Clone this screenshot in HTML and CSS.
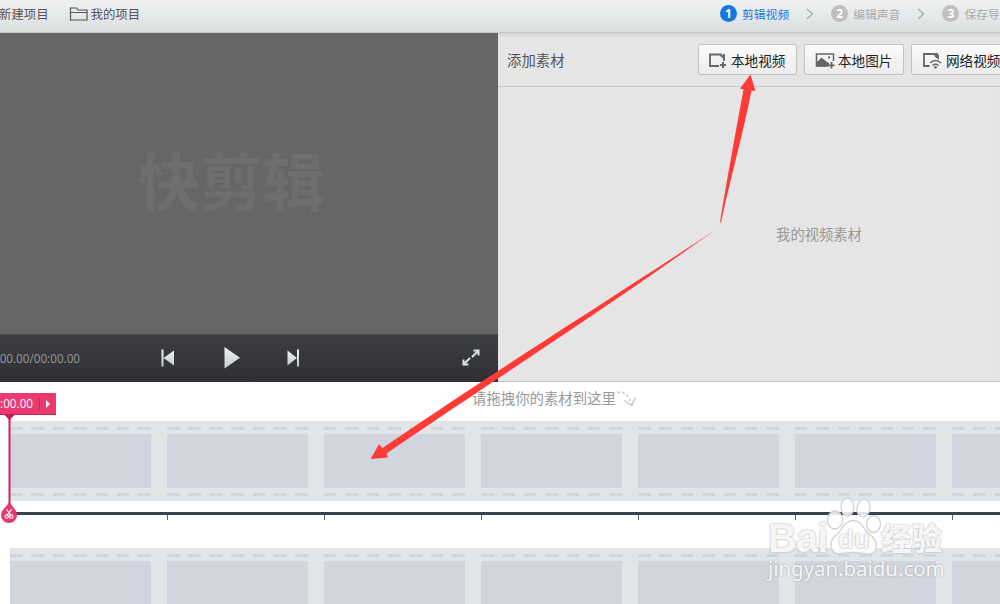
FILE: index.html
```html
<!DOCTYPE html>
<html lang="zh-CN">
<head>
<meta charset="utf-8">
<title>快剪辑</title>
<link rel="stylesheet" href="styles.css">
</head>
<body>
<div class="app">
  <header class="topbar">
    <nav class="menu">
      <span class="new-project">新建项目</span>
      <svg class="folder" width="20" height="16" viewBox="0 0 20 16"><path d="M1.500 14v-12h6l1.500 2h9v10zM1.500 6.500h16.500" fill="none" stroke="#555" stroke-width="1.200"/></svg>
      <span>我的项目</span>
    </nav>
    <ol class="steps">
      <li class="step active"><b class="num">1</b><span>剪辑视频</span></li>
      <li class="sep"><svg width="8" height="12" viewBox="0 0 8 12"><path d="M1 1l5.500 5L1 11" fill="none" stroke="#aaa" stroke-width="1.300"/></svg></li>
      <li class="step"><b class="num">2</b><span>编辑声音</span></li>
      <li class="sep"><svg width="8" height="12" viewBox="0 0 8 12"><path d="M1 1l5.500 5L1 11" fill="none" stroke="#aaa" stroke-width="1.300"/></svg></li>
      <li class="step"><b class="num">3</b><span>保存导</span></li>
    </ol>
  </header>
  <main class="workspace">
    <section class="player">
      <div class="screen"><span class="brand">快剪辑</span></div>
      <div class="controls">
        <span class="time">00.00/00:00.00</span>
        <svg class="icons" width="498" height="47" viewBox="0 0 498 47">
          <defs><linearGradient id="metal" x1="0" y1="0" x2="0" y2="1"><stop offset="0" stop-color="#f2f3f4"/><stop offset="1" stop-color="#c3c8cc"/></linearGradient></defs>
          <g fill="url(#metal)">
            <path d="M161.500 14.500h2v17h-2zM174 15.500v15l-10.500-7.500z"/>
            <path d="M224.500 12v21.500L240 22.700z"/>
            <path d="M287.500 15.500v15L297 23zM297 14.500h2v17h-2z"/>
          </g>
          <g fill="none" stroke="#dde0e2" stroke-width="2"><path d="M473.500 15.500h5v5M478 16l-6 6M463.500 24.500v5h5M464 29l6-6"/></g>
        </svg>
      </div>
    </section>
    <section class="library">
      <div class="library-head">
        <span class="library-title">添加素材</span>
        <div class="buttons">
          <div class="btn btn-video">
            <svg width="20" height="18" viewBox="0 0 20 18"><path d="M11 15H2V3.500h12" fill="none" stroke="#666" stroke-width="1.800"/><path d="M16 3v7" stroke="#666" stroke-width="1.800"/><path d="M11.500 4.500L17 9V3.500z" fill="#666"/><path d="M15 11v6M12 14h6" stroke="#666" stroke-width="2"/></svg>
            <span>本地视频</span>
          </div>
          <div class="btn btn-image">
            <svg width="20" height="18" viewBox="0 0 20 18"><path d="M11.500 15H1.500V3h17v7" fill="none" stroke="#666" stroke-width="1.500"/><path d="M2 15.500V11l4.500-4.500L12 11l2 1v3.500zM13 5.500h2v2h-2z" fill="#666"/><path d="M16.500 11v6.500M13.500 14.300h6" stroke="#666" stroke-width="1.800"/></svg>
            <span>本地图片</span>
          </div>
          <div class="btn btn-web">
            <svg width="20" height="18" viewBox="0 0 20 18"><path d="M7.500 15H2V3h13v4" fill="none" stroke="#666" stroke-width="1.800"/><path d="M11.500 4.500L17 9V3.500z" fill="#666"/><path d="M8 12q5.500-5 11 0M10.500 14.500q3-2.500 6 0" fill="none" stroke="#666" stroke-width="1.500"/><circle cx="13.500" cy="16.400" r="1.300" fill="#666"/></svg>
            <span>网络视频</span>
          </div>
        </div>
      </div>
      <div class="library-body"><span>我的视频素材</span></div>
    </section>
  </main>
  <section class="timeline">
    <div class="hint">
      <span>请拖拽你的素材到这里</span>
      <svg width="22" height="16" viewBox="0 0 22 16"><path d="M1 1.500q11-2 14.500 12" fill="none" stroke="#c0c9d3" stroke-width="1.300" stroke-dasharray="3 2"/><path d="M8 9.500l7.700 5L19.500 6.500" fill="none" stroke="#c0c9d3" stroke-width="1.400"/></svg>
    </div>
    <div class="track">
      <div class="cell"><i class="perf"></i><i class="frame"></i><i class="perf"></i></div><div class="cell"><i class="perf"></i><i class="frame"></i><i class="perf"></i></div><div class="cell"><i class="perf"></i><i class="frame"></i><i class="perf"></i></div><div class="cell"><i class="perf"></i><i class="frame"></i><i class="perf"></i></div><div class="cell"><i class="perf"></i><i class="frame"></i><i class="perf"></i></div><div class="cell"><i class="perf"></i><i class="frame"></i><i class="perf"></i></div><div class="cell"><i class="perf"></i><i class="frame"></i><i class="perf"></i></div>
    </div>
    <div class="ruler"></div>
    <div class="track">
      <div class="cell"><i class="perf"></i><i class="frame"></i></div><div class="cell"><i class="perf"></i><i class="frame"></i></div><div class="cell"><i class="perf"></i><i class="frame"></i></div><div class="cell"><i class="perf"></i><i class="frame"></i></div><div class="cell"><i class="perf"></i><i class="frame"></i></div><div class="cell"><i class="perf"></i><i class="frame"></i></div><div class="cell"><i class="perf"></i><i class="frame"></i></div>
    </div>
  </section>

  <div class="playhead">
    <div class="flag"><span class="flag-time">0:00.00</span><i class="flag-line"></i><i class="flag-arrow"></i></div>
    <svg class="stem" width="20" height="112" viewBox="0 0 20 112">
      <path d="M4.500 0h10L9.500 5z" fill="#c81f50"/>
      <path d="M9.500 3v88" stroke="#cf2257" stroke-width="2"/>
      <path d="M9.300 87C8 92 1 95 1 101a8 7.800 0 0 0 16 0C17 95 11 92 9.300 87z" fill="#e7386d" transform="translate(0 -.7)"/>
      <g fill="none" stroke="#fff" stroke-width="1.100" transform="translate(0 -.7)"><path d="M6.500 95l4.500 6M11.500 95L7 101"/><circle cx="6.700" cy="102.300" r="1.700"/><circle cx="11.300" cy="102.300" r="1.700"/></g>
    </svg>
  </div>

  <div class="watermark">
    <svg class="paw" width="60" height="64" viewBox="0 0 60 64">
      <g fill="#fff" fill-opacity=".85" stroke="#d0d1d4" stroke-width="1.300">
        <ellipse cx="13" cy="23" rx="7.500" ry="9"/><ellipse cx="25.500" cy="10" rx="6.500" ry="9"/><ellipse cx="41.500" cy="11" rx="6.500" ry="9" transform="rotate(10 41.500 11)"/><ellipse cx="51.500" cy="27" rx="7" ry="8.500"/>
        <path d="M31 23.500c9 0 11 10 18 15 9 8 6 20-5 18.500-9-2-18-2-26 0-10 0-12-11-5-18C20 34 22 23.500 31 23.500z"/>
      </g>
    </svg>
    <div class="wm-top"><span class="wm-bai">Bai</span><span class="wm-du">du</span><span class="wm-cn">经验</span></div>
    <div class="wm-url">jingyan.baidu.com</div>
  </div>
  <svg class="arrows" width="1000" height="604" viewBox="0 0 1000 604">
    <g fill="#ff3b38">
      <path d="M750.500 74.500L755.500 91 751.500 90.500C744 130 730 180 721 222.500L720 222.500C726 185 736 130 743.500 89.500L740 88.500z"/>
      <path d="M370.500 459L379 444.300 382.500 448C500 368 570 325 715 230.300C590 319 500 376 386.500 453.500L388 457.500z"/>
    </g>
  </svg>
</div>
</body>
</html>
```
FILE: styles.css
```css
* { box-sizing: border-box; }
body { margin: 0; }
.app {
  position: relative;
  width: 1000px;
  height: 604px;
  overflow: hidden;
  background: #fff;
  font-family: "Open Sans", "Noto Sans CJK SC", sans-serif;
  color: #555;
  white-space: nowrap;
}
.topbar {
  height: 33px;
  display: flex;
  justify-content: space-between;
  background: linear-gradient(#eff1f2, #dcdfe0);
  border-bottom: 1px solid #c6c7c8;
  font-size: 12.4px;
}
.menu { display: flex; align-items: center; height: 28px; margin-left: -1px; }
.folder { margin: 0 2px 0 20px; }
.steps { display: flex; align-items: center; width: 280px; height: 27px; margin: 0; padding: 0; list-style: none; font-size: 11.8px; }
.step { flex: none; display: flex; align-items: center; gap: 5px; color: #aaa; }
.step span { margin-top: -1px; }
.num {
  width: 17px;
  height: 17px;
  border-radius: 50%;
  background: #bfbfbf;
  color: #fff;
  font: bold 12px/17px "Open Sans", sans-serif;
  text-align: center;
}
.active { color: #1679df; }
.active .num { background: #1679df; }
.sep { flex: none; display: flex; width: 42px; padding-left: 17px; }

.workspace { display: flex; height: 349px; }
.player { width: 498px; height: 349px; background: #666; }
.screen { height: 301px; display: flex; justify-content: center; padding-right: 36px; align-items: center; }
.brand { font: 700 62.5px/90px "Noto Sans CJK SC", sans-serif; color: #6e6e6e; margin-top: -10px; }
.controls { position: relative; height: 48px; background: linear-gradient(#3d3e40, #2f3034); border-top: 1px solid #48494b; }
.time { width: 80px; display: flex; justify-content: flex-end; font-size: 11.7px; line-height: 47px; color: #969799; }
.icons { position: absolute; left: 0; top: 0; }
.library { width: 502px; background: #e5e5e5; border-bottom: 1px solid #c4c4c4; box-shadow: inset 0 4px 4px -3px #c6c7c8; }
.library-head { display: flex; align-items: center; height: 54px; padding-left: 9px; border-bottom: 1px solid #c9c9c9; }
.library-title { flex: none; width: 191px; padding-bottom: 1px; font-size: 14.4px; }
.buttons { display: flex; gap: 7px; }
.btn {
  flex: none;
  display: flex;
  align-items: center;
  gap: 2px;
  height: 31px;
  padding-left: 9px;
  border: 1px solid #c2c2c2;
  border-radius: 2px;
  background: linear-gradient(#fafafa, #ececec);
  color: #222;
  font-size: 13.6px;
}
.btn-video { width: 99px; }
.btn-video span { margin-left: 1px; }
.btn-image { width: 100px; gap: 3px; padding-left: 10px; }
.btn-web { width: 100px; gap: 4px; padding-left: 10px; }
.btn svg { flex: none; }
.library-body { height: 293px; display: flex; justify-content: center; align-items: center; padding-left: 140px; padding-bottom: 1px; font-size: 14.3px; color: #999; }

.timeline { height: 222px; }
.hint { display: flex; align-items: center; height: 39px; padding: 0 0 9px 472px; font-size: 14.4px; color: #999; }
.hint svg { margin-top: 3px; }
.track { display: flex; gap: 16px; height: 80px; margin-left: 10px; padding-top: 6px; background: #e1e5e7; }
.cell { flex: none; width: 141px; }
.perf { display: block; height: 3px; background: repeating-linear-gradient(90deg, #d1d5dd 0 12.500px, transparent 12.500px 21.400px); }
.frame { display: block; height: 54px; margin: 4px 0 5px; background: #d1d5dd; }
.ruler {
  height: 47px;
  margin-left: 10px;
  background:
    linear-gradient(#3b424e, #3b424e) 0 11px / 1000px 3px no-repeat,
    repeating-linear-gradient(90deg, transparent 0 156px, #60656c 156px 157px) 1px 14px / 100% 5px no-repeat;
}

.playhead { position: absolute; left: 0; top: 393px; }
.flag { display: flex; align-items: center; width: 56px; height: 22px; background: #ea3a70; border-bottom: 1px solid #c81f50; border-radius: 0 1px 1px 0; color: #fff; font-size: 11.7px; overflow: hidden; }
.flag-time { flex: none; display: flex; justify-content: flex-end; width: 33px; margin-top: -1px; }
.flag-line { width: 1px; height: 12px; margin-left: 6px; background: #c52a5b; }
.flag-arrow { margin-left: 6px; border: solid transparent; border-width: 4.5px 0 4.5px 4.5px; border-left-color: #fff; }
.stem { display: block; }

.watermark { position: absolute; left: 768px; top: 497px; width: 190px; color: rgba(255,255,255,.92); font-family: "Noto Sans", "Noto Sans CJK SC", sans-serif; text-shadow: 0 0 2px #999; }
.wm-top { position: relative; height: 59px; padding-top: 22px; display: flex; line-height: 38px; }
.wm-bai { width: 67px; font: bold 40px/38px "Liberation Sans", sans-serif; letter-spacing: -1px; }
.wm-du { width: 46px; padding-left: 3px; font: bold 26px/40px "Liberation Sans", sans-serif; }
.wm-cn { font-size: 30.5px; font-weight: 900; }
.wm-url { font-size: 20.4px; line-height: 25px; width: 178px; }
.paw { position: absolute; left: 54px; top: 0; }
.arrows { position: absolute; left: 0; top: 0; }
```
